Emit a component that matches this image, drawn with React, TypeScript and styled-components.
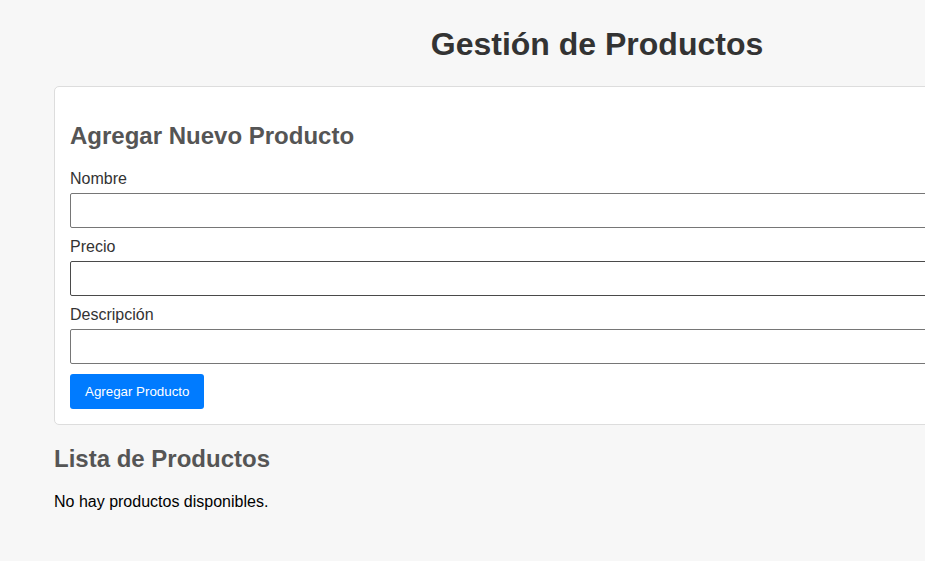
import React from "react";
import styled, { createGlobalStyle } from "styled-components";

const Global = createGlobalStyle`
  html, body { margin: 0; padding: 0; background: #f7f7f7; }
  body { font-family: "Liberation Sans", Arial, sans-serif; overflow: hidden; }
`;

const Page = styled.div`
  width: 1086px;
  padding: 26px 0 0 54px;
`;

const Title = styled.h1`
  margin: 0 0 23px;
  font-size: 32px;
  line-height: 37px;
  font-weight: bold;
  color: #333;
  text-align: center;
`;

const Card = styled.section`
  background: #fff;
  border: 1px solid #ddd;
  border-radius: 5px;
  padding: 15px;
  display: flex;
  flex-direction: column;
`;

const SectionTitle = styled.h2`
  margin: 20px 0;
  font-size: 24px;
  line-height: 28px;
  font-weight: bold;
  color: #555;
`;

const Label = styled.label`
  display: block;
  font-size: 16px;
  line-height: 18px;
  color: #333;
  margin-bottom: 5px;
`;

const Input = styled.input<{ $dark?: boolean }>`
  display: block;
  box-sizing: border-box;
  width: 100%;
  height: 35px;
  margin: 0 0 10px;
  padding: 8px;
  font-family: inherit;
  font-size: 16px;
  background: #fff;
  border: 1px solid ${(p) => (p.$dark ? "#4a4a4a" : "#767676")};
  border-radius: 2px;
  outline: none;
`;

const Button = styled.button`
  align-self: flex-start;
  box-sizing: border-box;
  height: 35px;
  padding: 0 15px;
  background: #007bff;
  color: #fff;
  border: none;
  border-radius: 3px;
  font-family: "Liberation Sans", Arial, sans-serif;
  font-size: 13.333px;
  cursor: pointer;
`;

const Empty = styled.p`
  margin: 0;
  font-size: 16px;
  line-height: 18px;
  color: #000;
`;

export default function App() {
  return (
    <Page>
      <Global />
      <Title>Gestión de Productos</Title>
      <Card>
        <SectionTitle>Agregar Nuevo Producto</SectionTitle>
        <Label>Nombre</Label>
        <Input type="text" />
        <Label>Precio</Label>
        <Input type="text" $dark />
        <Label>Descripción</Label>
        <Input type="text" />
        <Button>Agregar Producto</Button>
      </Card>
      <SectionTitle>Lista de Productos</SectionTitle>
      <Empty>No hay productos disponibles.</Empty>
    </Page>
  );
}
